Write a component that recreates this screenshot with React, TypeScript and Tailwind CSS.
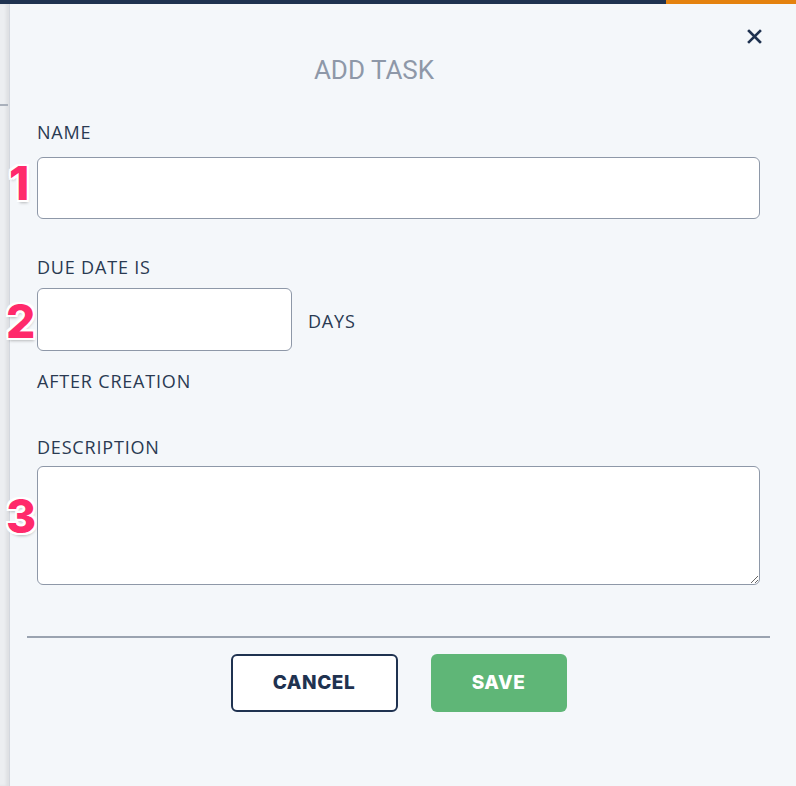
import React from "react";

const label = "text-[18px] leading-none tracking-[0.045em] text-[#2a3a52]";
const inputCls =
  "block bg-white border-[1.5px] border-[#8e98a8] rounded-[6px] outline-none";

function Badge({ n, className }: { n: string; className: string }) {
  return (
    <span
      className={
        "absolute font-extrabold text-[46px] leading-none text-[#ff2a6b] " + className
      }
      style={{
        fontFamily: "Inter, sans-serif",
        textShadow:
          "2px 0 0 #fff, -2px 0 0 #fff, 0 2px 0 #fff, 0 -2px 0 #fff, 2px 2px 0 #fff, -2px -2px 0 #fff, 2px -2px 0 #fff, -2px 2px 0 #fff, 1px 3px 3px rgba(0,0,0,0.25)",
      }}
    >
      {n}
    </span>
  );
}

export default function App() {
  return (
    <div
      className="relative w-[796px] h-[786px] overflow-hidden bg-[#f4f7fa]"
      style={{ fontFamily: '"Open Sans", sans-serif' }}
    >
      <div className="flex h-[4px]">
        <div className="w-[666px] bg-[#1f3250]" />
        <div className="flex-1 bg-[#e4820f]" />
      </div>
      <div className="flex h-[782px]">
        <div className="w-[10px] bg-[#eceef1] flex flex-col border-r border-[#d3d7de] shadow-[inset_-3px_0_3px_rgba(0,0,0,0.06)]">
          <div className="h-[100px]" />
          <div className="h-[2px] w-[8px] bg-[#a9b0bb]" />
        </div>
        <div className="flex-1 flex flex-col pl-[17px] pr-[26px]">
          <div className="flex justify-end pt-[24px] pr-[8px]">
            <svg width="15" height="15" viewBox="0 0 15 15" className="mt-[1px]">
              <path d="M2 2 L13 13 M13 2 L2 13" stroke="#1f3250" strokeWidth="2.6" strokeLinecap="square" />
            </svg>
          </div>
          <div
            className="text-center text-[26px] leading-none text-[#8e98a8] mt-[13px] pr-[49px]"
            style={{ fontFamily: "Roboto, sans-serif" }}
          >
            ADD TASK
          </div>
          <div className="px-[10px] flex flex-col">
            <div className={label + " mt-[40px]"}>NAME</div>
            <input className={inputCls + " mt-[16px] h-[62px] w-full"} />
            <div className={label + " mt-[39px]"}>DUE DATE IS</div>
            <div className="flex items-center mt-[12px]">
              <input className={inputCls + " h-[63px] w-[255px]"} />
              <span className={label + " ml-[16px] mt-[2px]"}>DAYS</span>
            </div>
            <div className={label + " mt-[21px]"}>AFTER CREATION</div>
            <div className={label + " mt-[48px]"}>DESCRIPTION</div>
            <textarea className={inputCls + " mt-[10px] h-[119px] w-full resize-y"} />
          </div>
          <div className="mt-[51px] h-[2px] bg-[#9aa3b0]" />
          <div className="flex justify-center gap-[33px] mt-[16px]">
            <button
              className="w-[167px] h-[58px] bg-white border-2 border-[#1f3250] rounded-[6px] text-[#1f3250] text-[19px] font-extrabold tracking-[0.03em]"
              style={{ fontFamily: "Inter, sans-serif" }}
            >
              CANCEL
            </button>
            <button
              className="w-[136px] h-[58px] bg-[#5fb677] rounded-[6px] text-white text-[19px] font-extrabold tracking-[0.03em]"
              style={{ fontFamily: "Inter, sans-serif" }}
            >
              SAVE
            </button>
          </div>
        </div>
      </div>
      <Badge n="1" className="left-[9px] top-[160px]" />
      <Badge n="2" className="left-[6px] top-[298px]" />
      <Badge n="3" className="left-[6px] top-[493px]" />
    </div>
  );
}
